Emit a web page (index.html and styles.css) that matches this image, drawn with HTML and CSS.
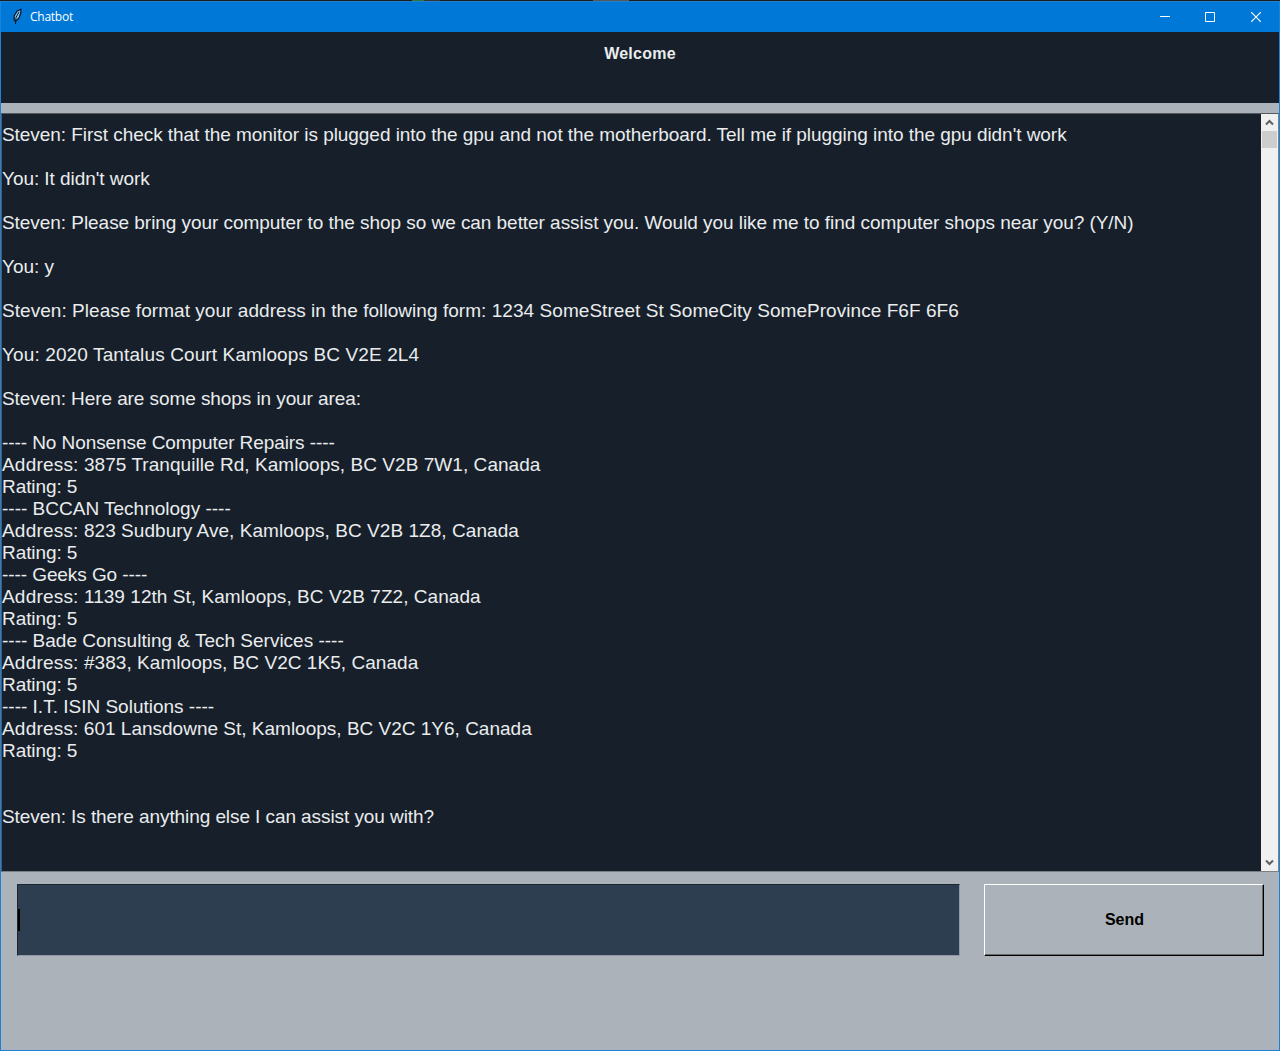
FILE: index.html
```html
<!DOCTYPE html>
<html lang="en">
<head>
<meta charset="utf-8">
<title>Chatbot</title>
<link rel="stylesheet" href="styles.css">
</head>
<body>
<div class="backdrop-edge"></div>
<div class="window">
  <header class="titlebar">
    <svg class="feather" width="12" height="18" viewBox="0 0 12 18"><path d="M9.8 1.2 6 3.2 3.2 8v4l1.5 1.2L8 10 9.8 5z" fill="#8fc4f4" stroke="#061522" stroke-width="1.2"/><path d="M8 4 5 9.5 4.5 16" fill="none" stroke="#061522"/></svg>
    <h1 class="title">Chatbot</h1>
    <div class="controls">
      <button class="control" aria-label="Minimize"><svg width="10" height="10"><path d="M0 4.5h10" stroke="#fff"/></svg></button>
      <button class="control maximize" aria-label="Maximize"><svg width="10" height="10"><path d="M.5.5h9v9h-9z" fill="none" stroke="#fff"/></svg></button>
      <button class="control" aria-label="Close"><svg width="10" height="10"><path d="M0 0l10 10M10 0L0 10" stroke="#fff" stroke-width="1.2"/></svg></button>
    </div>
  </header>
  <div class="welcome">Welcome</div>
  <div class="divider"></div>
  <main class="chat">
    <div class="messages">
      <p class="snug">Steven: First check that the monitor is plugged into the gpu and not the motherboard. Tell me if plugging into the gpu didn't work</p>
      <p class="snug">You: It didn't work</p>
      <p class="snug">Steven: Please bring your computer to the shop so we can better assist you. Would you like me to find computer shops near you? (Y/N)</p>
      <p>You: y</p>
      <p class="loose">Steven: Please format your address in the following form: 1234 SomeStreet St SomeCity SomeProvince F6F 6F6</p>
      <p class="wide">You: 2020 Tantalus Court Kamloops BC V2E 2L4</p>
      <p class="tight">Steven: Here are some shops in your area:</p>
      <ul class="shops">
        <li class="tight">---- No Nonsense Computer Repairs ----</li>
        <li class="loose"><span class="label">Address:</span> 3875 Tranquille Rd, Kamloops, BC V2B 7W1, Canada</li>
        <li class="tight">Rating: 5</li>
        <li>---- BCCAN Technology ----</li>
        <li class="loose"><span class="label">Address:</span> 823 Sudbury Ave, Kamloops, BC V2B 1Z8, Canada</li>
        <li class="tight">Rating: 5</li>
        <li class="tight">---- Geeks Go ----</li>
        <li class="loose"><span class="label">Address:</span> 1139 12th St, Kamloops, BC V2B 7Z2, Canada</li>
        <li class="tight">Rating: 5</li>
        <li>---- Bade Consulting &amp; Tech Services ----</li>
        <li class="loose"><span class="label">Address:</span> #383, Kamloops, BC V2C 1K5, Canada</li>
        <li class="tight">Rating: 5</li>
        <li>---- I.T. ISIN Solutions ----</li>
        <li><span class="label">Address:</span> 601 Lansdowne St, Kamloops, BC V2C 1Y6, Canada</li>
        <li class="tight">Rating: 5</li>
      </ul>
      <p class="tight">Steven: Is there anything else I can assist you with?</p>
    </div>
    <div class="scrollbar">
      <svg class="arrow" width="17" height="17"><path d="M5 10.5 8.5 7 12 10.5" fill="none" stroke="#606060" stroke-width="2"/></svg>
      <div class="thumb"></div>
      <svg class="arrow arrow-down" width="17" height="17"><path d="M5 6.5 8.5 10 12 6.5" fill="none" stroke="#606060" stroke-width="2"/></svg>
    </div>
  </main>
  <footer class="composer">
    <div class="entry"><span class="caret"></span></div>
    <button class="send">Send</button>
  </footer>
</div>
</body>
</html>
```
FILE: styles.css
```css
* { box-sizing: border-box; }
body {
  margin: 0;
  background: #1b1b20;
  font-family: "Liberation Sans", Arial, sans-serif;
}
.backdrop-edge {
  height: 1px;
  background: linear-gradient(to right, #1e1e22 412px, #2f7a3a 412px 424px, #33363b 424px 440px, #1e1e22 440px 593px, #55585c 593px 629px, #1e1e22 629px);
}
.window {
  display: flex;
  flex-direction: column;
  width: 1280px;
  height: 1050px;
  border: 1px solid #1883d7;
  border-top: 0;
  background: #abb2b9;
}
.titlebar {
  display: flex;
  align-items: center;
  height: 31px;
  padding-left: 10px;
  border-top: 1px solid #1f7fcf;
  background: #0078d7;
}
.title {
  margin: 0 auto 0 7px;
  font: 400 12px/30px "Open Sans", "Noto Sans", sans-serif;
  letter-spacing: -0.25px;
  color: #fff;
}
.controls { display: flex; }
.control {
  display: flex;
  align-items: center;
  justify-content: center;
  width: 46px;
  height: 29px;
  padding: 0;
  border: 0;
  background: none;
}
.maximize {
  width: 45px;
  padding-right: 1px;
}
.welcome {
  height: 71px;
  padding-top: 12px;
  background: #17202a;
  color: #eaecee;
  font-size: 16px;
  font-weight: 700;
  letter-spacing: 0.25px;
  line-height: 20px;
  text-align: center;
}
.divider { height: 10px; }
.chat {
  display: flex;
  height: 759px;
  border: 1px solid #7c8085;
  border-top-color: #55595f;
  border-left-color: #55595f;
  background: #17202a;
}
.messages {
  flex: 1;
  padding-top: 10px;
  color: #eaecee;
  font-size: 19px;
  line-height: 22px;
  white-space: nowrap;
}
.messages p { margin: 0 0 22px; }
.shops {
  margin: 0 0 44px;
  padding: 0;
  list-style: none;
}
.snug { letter-spacing: -0.05px; }
.tight { letter-spacing: -0.08px; }
.loose { letter-spacing: 0.05px; }
.wide { letter-spacing: 0.12px; }
.label { letter-spacing: 0.2px; }
.scrollbar {
  display: flex;
  flex-direction: column;
  align-items: center;
  width: 17px;
  background: #f0f0f0;
}
.thumb {
  width: 15px;
  height: 17px;
  background: #cdcdcd;
}
.arrow { display: block; }
.arrow-down { margin-top: auto; }
.composer {
  display: flex;
  flex: 1;
  align-items: flex-start;
  justify-content: space-between;
  padding: 12px 15px 0 16px;
}
.entry {
  display: flex;
  align-items: center;
  width: 943px;
  height: 72px;
  border: 1px solid #9099a5;
  border-top-color: #1c2631;
  border-left-color: #1c2631;
  background: #2c3e50;
}
.caret {
  width: 2px;
  height: 22px;
  background: #000;
}
.send {
  width: 280px;
  height: 72px;
  padding: 0 0 0 1px;
  border: 1px solid #000;
  border-top-color: #fff;
  border-left-color: #fff;
  background: #abb2b9;
  box-shadow: inset -1px -1px #696969;
  font: 700 16px/20px "Liberation Sans", Arial, sans-serif;
  color: #000;
}
```
